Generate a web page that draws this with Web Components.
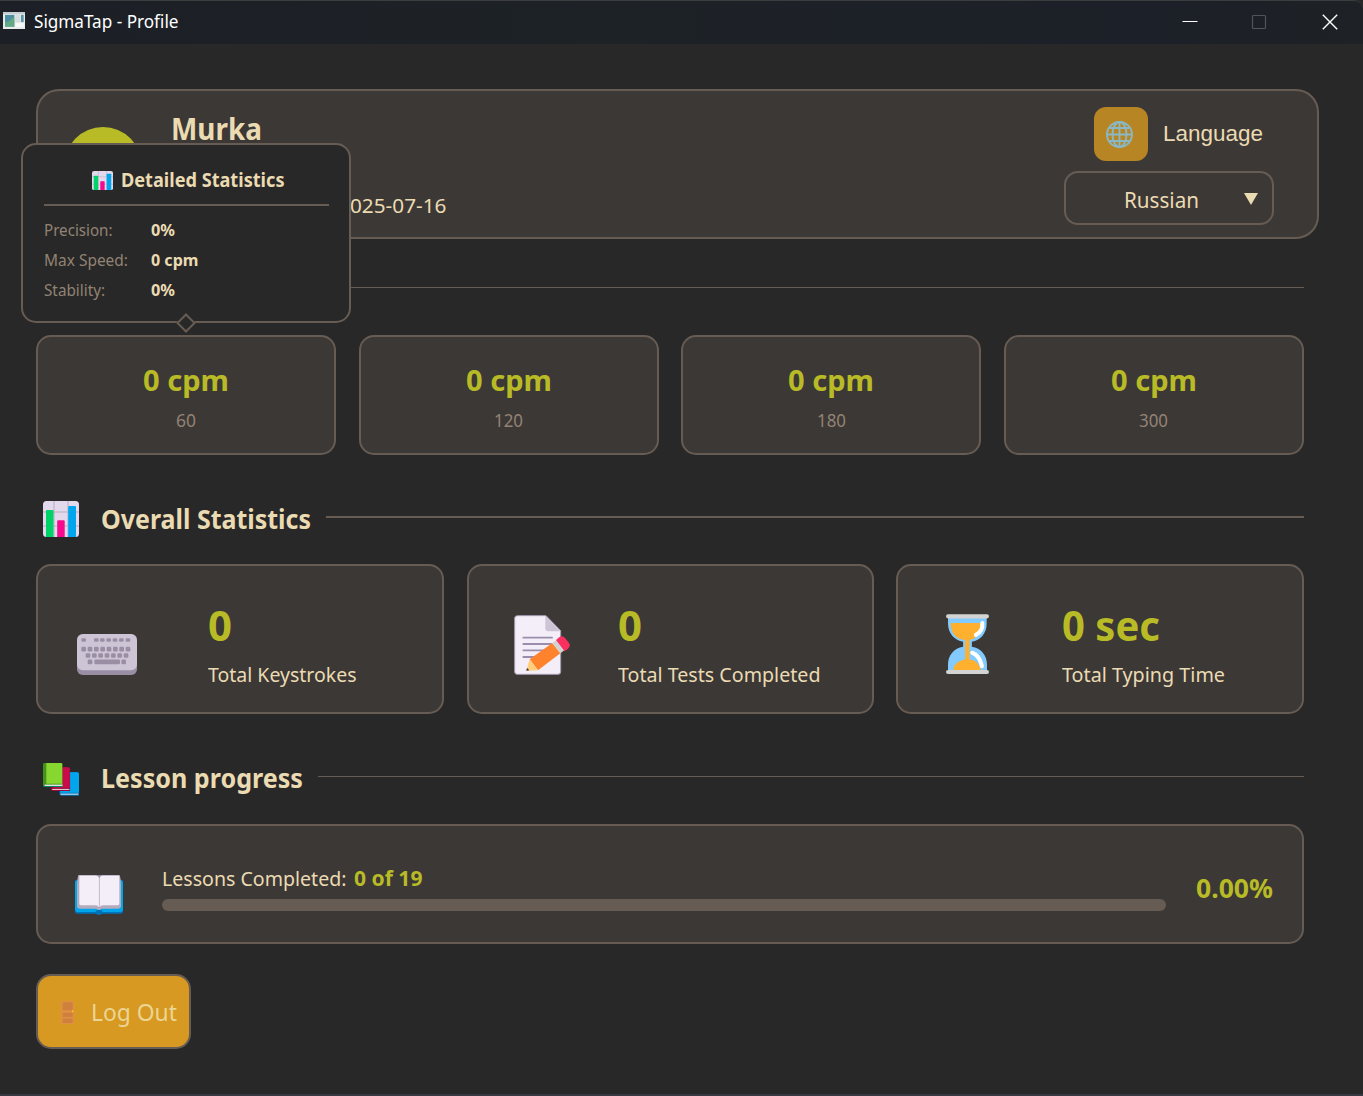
<!DOCTYPE html>
<html lang="en">
<head>
<meta charset="utf-8">
<title>SigmaTap - Profile</title>
<style>
html,body{margin:0;height:100%;background:#282828;overflow:hidden}
body{--card:#3c3836;--line:#665c54;--text:#ebdbb2;--muted:#928374;--green:#b8bb26;font-family:"Noto Sans","Open Sans",sans-serif;color:var(--text)}
</style>
</head>
<body>
<profile-window></profile-window>
<script>
const icons = {
app:['8 36 66 52','<path fill="#e8eaec" d="M8 36h66v52H8z"/><path fill="#c3cdd3" d="M8 36h66v7H8z"/><path fill="#4c8fa3" d="M14 45h28v36H14z"/><path fill="#69b278" d="M42 51v30H14V66c12 4 18-12 28-15z" opacity=".75"/><path fill="#d6dbdd" d="M45 45h15v22H45z"/><path fill="#5795ad" d="M62 45h8v22h-8z"/><path fill="#f7f8f8" d="M45 70h25v12H45z"/>'],
chart:['0 0 36 36','<rect width="36" height="36" rx="3.5" fill="#e2d9ec"/><path d="M11 0v36M25 0v36M0 11h36M0 25h36" stroke="#b7adc1" stroke-width="1"/><path fill="#00d26a" d="M3 10q0-1 1-1h5.500q1 0 1 1v26H3z"/><path fill="#f70a8d" d="M14.200 20.500q0-1.200 1-1.200h5.500q1 0 1 1.200V36h-7.500z"/><path fill="#00a6ed" d="M25.200 6q0-1 1-1h5.800q1 0 1 1v30h-7.800z"/>'],
globe:['0 0 27 27','<g fill="none" stroke="#8ab8c4" stroke-width="1.900"><circle cx="13.500" cy="13.500" r="12.500"/><ellipse cx="13.500" cy="13.500" rx="7" ry="12.500"/><path d="M13.500 1v25M1 13.500h25M3.500 7h20M3.500 20h20"/></g>'],
note:['74 74 168 180','<path d="M84 76h86l44 45v123q0 8-8 8H84q-8 0-8-8V84q0-8 8-8z" fill="#f3eef8" stroke="#a79bb1" stroke-width="3"/><path fill="#cdc4d6" d="M168 77l46 46h-37q-9 0-9-9z"/><path stroke="#9b8ead" stroke-width="5.500" stroke-linecap="round" d="M102 142h86M102 161h84M102 180h65M102 200h38"/><path fill="#ff822d" d="M121 207l68-49 24 31-67 51z"/><path fill="#ffce7c" d="M121 207l25 33-35 1z"/><path fill="#402a32" d="M113 233l7 7-9 1z"/><path fill="#d3d3d3" d="M189 158l13-10 24 31-13 10z"/><path fill="#f92f60" d="M200 149l10-8q9-7 17 2l12 15q6 9-3 17l-10 8z"/>'],
glass:['78 74 128 178','<path fill="#83cbff" d="M84 84h115v18c0 30-19 50-44 54v15c27 4 45 25 45 53v18H84v-18c0-28 18-49 45-53v-15c-25-4-45-24-45-54z"/><path fill="#ffb02e" d="M92 101h90c2 31-19 50-34 50v58c19 2 29 14 34 31H100c0-17 16-28 35-31v-58c-25 0-43-19-43-50z"/><path d="M186 101q2 25-19 35M156 189q22 8 29 40" fill="none" stroke="#fff" stroke-width="12" stroke-linecap="round"/><path d="M84 81h116M84 246h116" stroke="#d3d3d3" stroke-width="12" stroke-linecap="round"/>'],
books:['38 38 109 100','<path fill="#0074ba" d="M88 69q0-3 4-3h50q5 0 5 5v66H94q-6 0-6-5z"/><path fill="#00a6ed" d="M99 66h43q5 0 5 5v57H90z"/><path d="M91 132.500h54" stroke="#e9eef4" stroke-width="3"/><path fill="#990838" d="M62 52h53q5 0 5 5v66H68q-6 0-6-5z"/><path fill="#ca0b4a" d="M72 51h42q5 0 5 5v57H72z"/><path d="M66 118h52" stroke="#f3dce8" stroke-width="3"/><path fill="#44911b" d="M38 42q0-4 5-4h50q4 0 4 4v69H44q-6 0-6-6z"/><path fill="#86d72f" d="M48 38h44q4 0 4 4v59H48z"/><path d="M43 105.500h54" stroke="#e9eef4" stroke-width="4"/><path fill="#008463" d="M39 108h58v3H44q-4 0-5-3z"/>'],
open:['135 375 144 120','<path fill="#0074ba" d="M135 398q0-8 8-8h128q8 0 8 8v85q0 8-8 8h-55q-9 8-18 0h-55q-8 0-8-8z"/><path fill="#00a6ed" d="M135 398q0-8 8-8h128q8 0 8 8v80q0 8-8 8h-53q-4-8-11-8t-11 8h-53q-8 0-8-8z"/><path fill="#b4acbc" d="M145 375h55l7 5 7-5h55q4 12 4 27v65q0 9-9 9h-49q-8 8-16 0h-49q-9 0-9-9v-65q0-14 4-27z"/><path fill="#998ea4" d="M200 375h14v10h-14z"/><path fill="#f3eef8" d="M150 377h48q9 0 9 8v87q-3-6-10-6h-43q-6 0-6-5v-80q0-4 2-4zM266 377h-48q-9 0-9 8v87q3-6 10-6h43q6 0 6-5v-80q0-4-2-4z"/><path d="M208 384v82" stroke="#c8bfd0" stroke-width="2"/>'],
door:['122 122 40 70','<path fill="#df9042" d="M122 124q0-2 2-2h36q2 0 2 2v68h-40z"/><g fill="#cf803c"><rect x="127" y="126" width="31" height="24" rx="2"/><rect x="127" y="158" width="31" height="13" rx="2"/><rect x="127" y="175" width="31" height="14" rx="2"/></g><circle cx="158" cy="153" r="3" fill="#f9bd27"/>'],
min:['0 0 16 16','<path stroke="#fff" d="M.5 7.500h15"/>'],
max:['0 0 16 16','<rect x="1.500" y="1.500" width="13" height="13" rx="1" fill="none" stroke="#505456" stroke-width="1.200"/>'],
close:['0 0 16 16','<path stroke="#fff" stroke-width="1.400" d="M.8.800l14.400 14.400M15.200.800L.8 15.200"/>'],
arrow:['0 0 14 12','<path fill="#ebdbb2" d="M0 0h14L7 12z"/>']
};
let kb='<rect x="52" y="142" width="180" height="112" rx="17" fill="#998ea4"/><rect x="52" y="132" width="180" height="108" rx="17" fill="#cdc4d6"/><g fill="#998ea4">';
const key=(x,y,h)=>{kb+=`<rect x="${x-7}" y="${y-h/2}" width="14" height="${h}" rx="4"/>`};
[72,110,128,147,166,185,205].forEach(x=>key(x,150,10));
for(let i=0;i<8;i++)key(72+i*19,177,14);
for(let i=0;i<7;i++)key(85+i*19,196,14);
key(91,215,14);key(192,215,14);
icons.keyboard=['52 132 180 122',kb+'<rect x="104" y="208" width="77" height="14" rx="4"/></g>'];

const shadow=(el,html)=>{el.attachShadow({mode:'open'}).innerHTML=html};

customElements.define('ui-icon',class extends HTMLElement{
  connectedCallback(){
    const [box,art]=icons[this.getAttribute('name')];
    shadow(this,`<style>:host{display:block;flex:none;width:${this.getAttribute('w')}px;height:${this.getAttribute('h')}px}svg{display:block;width:100%;height:100%}</style><svg viewBox="${box}" preserveAspectRatio="none">${art}</svg>`);
  }
});
// One line of text condensed or widened to a given advance width.
customElements.define('ui-label',class extends HTMLElement{
  connectedCallback(){
    const a=n=>this.getAttribute(n),w=+a('w');
    shadow(this,`<style>:host{display:block;flex:none;width:${w}px;height:${a('h')||30}px;line-height:${a('h')||30}px;font-size:${a('size')}px;white-space:nowrap}span{display:inline-block;transform-origin:0 50%}</style><span><slot></slot></span>`);
    const s=this.shadowRoot.querySelector('span');
    s.style.transform=`scaleX(${w/s.getBoundingClientRect().width})`;
  }
});
customElements.define('title-bar',class extends HTMLElement{
  connectedCallback(){
    shadow(this,`<style>:host{display:flex;box-sizing:border-box;height:44px;background:linear-gradient(90deg,#1c2026,#1d2227 45%,#1c2028 85%,#1e2125);border-top:1px solid #3b3d3e;border-top-right-radius:9px;padding:0 25px 0 3px;color:#fff}
    .a{margin-top:11px}.t{margin:5px 0 0 9px}.b{display:flex;gap:53px;margin:13px 0 0 auto}.c{margin-left:2px}</style>
    <ui-icon class="a" name="app" w="22" h="17"></ui-icon><ui-label class="t" size="17.600" w="144.500"><slot></slot></ui-label>
    <div class="b"><ui-icon name="min" w="16" h="16"></ui-icon><ui-icon name="max" w="16" h="16"></ui-icon><ui-icon class="c" name="close" w="16" h="16"></ui-icon></div>`);
  }
});
customElements.define('profile-header',class extends HTMLElement{
  connectedCallback(){
    shadow(this,`<style>:host{display:flex;box-sizing:border-box;width:1283px;height:150px;background:var(--card);border:2px solid var(--line);border-radius:23px}
    .av{width:78px;height:78px;border-radius:50%;background:var(--green);margin:36px 0 0 26px}
    .who{margin:20px 0 0 29px}.who .n{font-weight:700}.who .d{margin:43px 0 0 179px}
    .lang{margin:16px 43px 0 auto;width:210px}.row{display:flex;margin-left:30px}
    .g{width:54px;height:54px;box-sizing:border-box;border-radius:12px;background:#b88524;padding:14px 0 0 12px}
    .l{font-family:"Liberation Sans",sans-serif;margin:12px 0 0 15px}
    .sel{display:flex;box-sizing:border-box;width:210px;height:54px;border:2px solid var(--line);border-radius:14px;margin-top:10px}
    .r{margin:11px 0 0 57.500px}.v{margin:20px 0 0 45px}</style>
    <div class="av"></div>
    <div class="who"><ui-label class="n" size="29.500" w="91" h="36">Murka</ui-label><ui-label class="d" size="20.800" w="96.500">025-07-16</ui-label></div>
    <div class="lang"><div class="row"><div class="g"><ui-icon name="globe" w="27" h="27"></ui-icon></div><ui-label class="l" size="22.500" w="100">Language</ui-label></div>
    <div class="sel"><ui-label class="r" size="22" w="75">Russian</ui-label><ui-icon class="v" name="arrow" w="14" h="12"></ui-icon></div></div>`);
  }
});
customElements.define('section-title',class extends HTMLElement{
  connectedCallback(){
    const a=n=>this.getAttribute(n);
    shadow(this,`<style>:host{display:flex;height:${a('box')}px;font-weight:700}
    .i{margin:${a('top')}px 0 0 6.500px}.t{margin:47px 0 0 22px}i{flex:1;height:${a('line')}px;background:var(--line);margin:${a('y')}px 0 0 15.500px}</style>
    <ui-icon class="i" name="${a('icon')}" w="36" h="${a('ih')}"></ui-icon><ui-label class="t" size="26.500" w="${a('w')}" h="34"><slot></slot></ui-label><i></i>`);
  }
});
customElements.define('speed-card',class extends HTMLElement{
  connectedCallback(){
    shadow(this,`<style>:host{display:flex;flex-direction:column;align-items:center;box-sizing:border-box;width:300px;height:120px;background:var(--card);border:2px solid var(--line);border-radius:15px;padding-top:26px}
    .s{font-weight:700;color:var(--green)}.n{color:var(--muted);margin-top:9px}</style>
    <ui-label class="s" size="29" w="86" h="34">0 cpm</ui-label><ui-label class="n" size="17.300" w="${this.getAttribute('w')}"><slot></slot></ui-label>`);
  }
});
customElements.define('total-card',class extends HTMLElement{
  connectedCallback(){
    const a=n=>this.getAttribute(n);
    shadow(this,`<style>:host{display:flex;box-sizing:border-box;height:150px;background:var(--card);border:2px solid var(--line);border-radius:15px}
    .i{margin:${a('iy')}px 0 0 ${a('ix')}px}.t{margin:34px 0 0 ${a('gap')}px}.v{font-weight:700;color:var(--green)}.l{margin-top:9px}</style>
    <ui-icon class="i" name="${a('icon')}" w="${a('iw')}" h="${a('ih')}"></ui-icon>
    <div class="t"><ui-label class="v" size="41" w="${a('vw')}" h="50">${a('value')}</ui-label><ui-label class="l" size="20.800" w="${a('lw')}"><slot></slot></ui-label></div>`);
  }
});
customElements.define('lesson-card',class extends HTMLElement{
  connectedCallback(){
    shadow(this,`<style>:host{display:flex;box-sizing:border-box;width:1268px;height:120px;background:var(--card);border:2px solid var(--line);border-radius:15px}
    .i{margin:49px 0 0 37px}.p{margin:37px 0 0 39px;width:1004px}.r{display:flex;gap:7px}b,.pc{color:var(--green);font-weight:700}
    .bar{height:12px;border-radius:6px;background:var(--line);margin-top:6px}.pc{margin:45px 0 0 30px}</style>
    <ui-icon class="i" name="open" w="48" h="40"></ui-icon>
    <div class="p"><div class="r"><ui-label size="20.800" w="184.500">Lessons Completed:</ui-label><b><ui-label size="20.500" w="68.500">0 of 19</ui-label></b></div><div class="bar"></div></div>
    <ui-label class="pc" size="26.500" w="77" h="34">0.00%</ui-label>`);
  }
});
customElements.define('logout-button',class extends HTMLElement{
  connectedCallback(){
    shadow(this,`<style>:host{display:flex;box-sizing:border-box;width:155px;height:75px;background:#d79921;border:2px solid var(--line);border-radius:15px;color:#ebd592}
    .i{margin:25px 0 0 23px}.t{margin:21px 0 0 16.500px}</style><ui-icon class="i" name="door" w="13" h="23"></ui-icon><ui-label class="t" size="23.500" w="86"><slot></slot></ui-label>`);
  }
});
customElements.define('detail-tooltip',class extends HTMLElement{
  connectedCallback(){
    const row=(l,lw,v,vw)=>`<div class="r"><div class="k"><ui-label size="16" w="${lw}">${l}</ui-label></div><ui-label class="v" size="15.700" w="${vw}">${v}</ui-label></div>`;
    shadow(this,`<style>:host{position:absolute;left:21px;top:143px;box-sizing:border-box;width:330px;height:180px;background:#282828;border:2px solid var(--line);border-radius:15px;padding:20px 20px 0 20.500px}
    .h{display:flex;gap:7.500px;font-weight:700;margin-left:48.500px}.h ui-icon{margin-top:6px}
    hr{border:0;height:2px;background:var(--line);margin:9px 0}.r{display:flex;height:30px}.k{width:107.500px;color:var(--muted)}.v{font-weight:700}
    .p{position:absolute;left:156px;top:171px;width:14px;height:14px;box-sizing:border-box;border:2px solid var(--line);background:#282828;transform:rotate(45deg)}</style>
    <div class="h"><ui-icon name="chart" w="21" h="19"></ui-icon><ui-label size="18.800" w="163.500">Detailed Statistics</ui-label></div><hr>
    ${row('Precision:',68.5,'0%',24)}${row('Max Speed:',84,'0 cpm',47.5)}${row('Stability:',61,'0%',24)}<div class="p"></div>`);
  }
});
customElements.define('profile-window',class extends HTMLElement{
  connectedCallback(){
    shadow(this,`<style>:host{display:block;position:relative;box-sizing:border-box;width:1363px;height:1096px;background:#282828;border-bottom:2px solid #363941}
    main{padding:45px 0 0 36px;width:1268px}.first{height:96px;display:flex}.first i{flex:1;height:1px;background:var(--line);margin:48px 0 0 300px}
    .row{display:flex;justify-content:space-between}.c1,.c3{width:408px}.c2{width:407px}logout-button{margin-top:30px}</style>
    <title-bar>SigmaTap - Profile</title-bar>
    <main><profile-header></profile-header>
    <div class="first"><i></i></div>
    <div class="row"><speed-card w="20">60</speed-card><speed-card w="29">120</speed-card><speed-card w="29">180</speed-card><speed-card w="29">300</speed-card></div>
    <section-title icon="chart" box="109.500" top="46" ih="36" w="210" line="2" y="61">Overall Statistics</section-title>
    <div class="row" style="margin-top:-.5px">
    <total-card class="c1" icon="keyboard" iw="60" ih="41" ix="39.300" iy="67.700" gap="71.200" value="0" vw="24" lw="148.500">Total Keystrokes</total-card>
    <total-card class="c2" icon="note" iw="56" ih="60" ix="45.500" iy="48.500" gap="47.500" value="0" vw="24" lw="202.500">Total Tests Completed</total-card>
    <total-card class="c3" icon="glass" iw="43" ih="60" ix="48" iy="48.300" gap="73" value="0 sec" vw="98" lw="163">Total Typing Time</total-card></div>
    <section-title icon="books" box="110" top="48.500" ih="33" w="202" line="1" y="62">Lesson progress</section-title>
    <lesson-card></lesson-card>
    <logout-button>Log Out</logout-button></main>
    <detail-tooltip></detail-tooltip>`);
  }
});
</script>
</body>
</html>
